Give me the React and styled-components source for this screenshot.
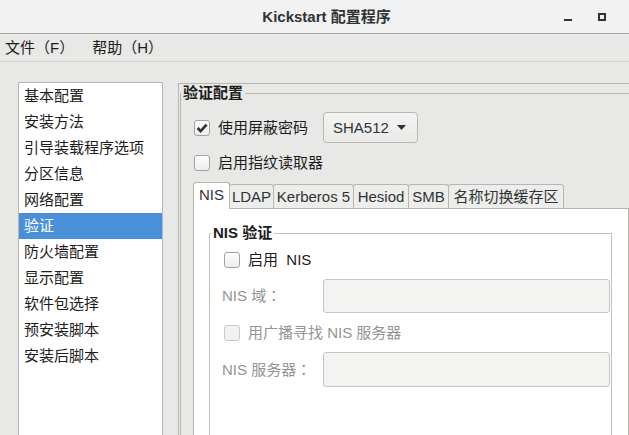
import React from 'react';
import styled, { createGlobalStyle } from 'styled-components';

const Global = createGlobalStyle`
  html, body { margin: 0; padding: 0; background: #e8e8e7; }
  body {
    font-family: "Liberation Sans", "Noto Sans CJK SC", sans-serif;
    font-size: 15px;
    color: #1c1c1c;
  }
  * { box-sizing: border-box; }
`;

const Window = styled.div`
  width: 629px;
  height: 435px;
  display: flex;
  flex-direction: column;
  overflow: hidden;
  background: #e8e8e7;
`;

const TitleBar = styled.div`
  height: 34px;
  flex: none;
  display: flex;
  align-items: center;
  background: #f2f2f2;
  border-bottom: 1px solid #a6a6a6;
`;

const Title = styled.div`
  flex: 1;
  padding-left: 104px;
  text-align: center;
  font-weight: bold;
  font-size: 15px;
  line-height: 18px;
  color: #2e3436;
`;

const Controls = styled.div`
  width: 80px;
  display: flex;
  padding-left: 2px;
`;

const WinButton = styled.div`
  width: 34px;
  height: 20px;
  display: flex;
  align-items: center;
  justify-content: center;
`;

const MenuBar = styled.div`
  height: 28px;
  flex: none;
  display: flex;
  align-items: center;
  gap: 18px;
  padding-left: 5px;
  border-bottom: 1px solid #d3d3d2;
`;

const MenuItem = styled.span`
  line-height: 18px;
`;

const Body = styled.div`
  flex: 1;
  display: flex;
  align-items: flex-start;
  padding: 20px 0 0 18px;
`;

const Sidebar = styled.ul`
  list-style: none;
  margin: 0;
  padding: 0;
  width: 145px;
  height: 420px;
  flex: none;
  background: #ffffff;
  border: 1px solid #b6b6b3;
`;

const SideItem = styled.li`
  height: 26px;
  line-height: 26px;
  padding-left: 5px;
  background: ${p => (p.$active ? '#4a90d9' : 'transparent')};
  color: ${p => (p.$active ? '#ffffff' : '#1c1c1c')};
`;

const RightPane = styled.div`
  margin: 1px 0 0 15px;
  width: 480px;
  height: 420px;
  flex: none;
  border-top: 1px solid #b6b6b3;
  border-left: 1px solid #b6b6b3;
  padding: 1px 0 0 1px;
`;

const Frame = styled.fieldset`
  margin: 0;
  padding: 0;
  min-width: 0;
  border: 1px solid ${p => p.$color || '#b6b6b3'};
  height: ${p => p.$height || 'auto'};
`;

const Legend = styled.legend`
  padding: 0 2px;
  margin-left: ${p => p.$offset || 0}px;
  font-weight: bold;
  font-size: 15px;
  line-height: 16px;
  color: #1c1c1c;
`;

const FrameContent = styled.div`
  display: flex;
  flex-direction: column;
  padding: 11px 0 0 12px;
`;

const OptionRow = styled.div`
  display: flex;
  align-items: center;
  height: ${p => p.$h || 18}px;
  margin-top: ${p => p.$mt || 0}px;
  padding-left: ${p => p.$indent || 0}px;
`;

const CheckLabel = styled.label`
  display: flex;
  align-items: center;
  gap: 8px;
  line-height: 18px;
  color: ${p => (p.$disabled ? '#929595' : '#1c1c1c')};
`;

const Box = styled.span`
  width: 16px;
  height: 16px;
  flex: none;
  border-radius: 3px;
  border: 1px solid ${p => (p.$disabled ? '#cbcbc9' : '#a3a3a0')};
  background: ${p => (p.$disabled ? '#f1f1f0' : 'linear-gradient(#ffffff, #ececeb)')};
  display: flex;
  align-items: center;
  justify-content: center;
`;

const DropButton = styled.div`
  margin-left: 15px;
  width: 95px;
  height: 31px;
  display: flex;
  align-items: center;
  justify-content: space-between;
  padding: 0 11px 0 9px;
  border: 1px solid #b6b6b3;
  border-radius: 4px;
  background: linear-gradient(#f4f4f3, #e9e9e8);
  color: #2e3436;
`;

const Notebook = styled.div`
  margin-top: 10px;
  width: 436px;
  display: flex;
  flex-direction: column;
`;

const TabRow = styled.div`
  display: flex;
  align-items: flex-end;
  height: 26px;
`;

const Tab = styled.div`
  width: ${p => p.$w}px;
  height: ${p => (p.$active ? 27 : 24)}px;
  margin-right: -1px;
  margin-bottom: ${p => (p.$active ? -1 : 0)}px;
  position: relative;
  z-index: ${p => (p.$active ? 2 : 1)};
  display: flex;
  align-items: center;
  justify-content: center;
  padding-bottom: ${p => (p.$active ? 3 : 0)}px;
  border: 1px solid #b6b6b3;
  border-bottom: none;
  border-radius: 3px 3px 0 0;
  background: ${p => (p.$active ? '#ffffff' : '#ededec')};
  color: #2e3436;
  line-height: 18px;
`;

const TabBody = styled.div`
  height: 300px;
  background: #ffffff;
  border: 1px solid #b6b6b3;
  padding: 16px 16px 0 15px;
`;

const NisContent = styled.div`
  display: flex;
  flex-direction: column;
  gap: 10px;
  padding: 10px 1px 0 12px;
`;

const FieldRow = styled.div`
  display: grid;
  grid-template-columns: 101px 1fr;
  align-items: center;
`;

const FieldLabel = styled.span`
  font-family: "Liberation Sans", "Noto Sans CJK TC", sans-serif;
  color: #929595;
  line-height: 18px;
`;

const Input = styled.div`
  height: ${p => p.$h || 34}px;
  border: 1px solid #c6c6c4;
  border-radius: 3px;
  background: #f3f3f2;
`;

function Checkbox({ checked, disabled, children }) {
  return (
    <CheckLabel $disabled={disabled}>
      <Box $disabled={disabled}>
        {checked && (
          <svg width="12" height="12" viewBox="0 0 12 12">
            <path d="M1.6 6 L4.6 9.2 L10.6 2.6" fill="none" stroke="#2e3436" strokeWidth="2.6" />
          </svg>
        )}
      </Box>
      <span>{children}</span>
    </CheckLabel>
  );
}

const sideItems = ['基本配置', '安装方法', '引导装载程序选项', '分区信息', '网络配置', '验证', '防火墙配置', '显示配置', '软件包选择', '预安装脚本', '安装后脚本'];
const tabs = [
  { t: 'NIS', w: 37 },
  { t: 'LDAP', w: 45 },
  { t: 'Kerberos 5', w: 81 },
  { t: 'Hesiod', w: 56 },
  { t: 'SMB', w: 41 },
  { t: '名称切换缓存区', w: 116 },
];

export default function App() {
  return (
    <>
      <Global />
      <Window>
        <TitleBar>
          <Title>Kickstart 配置程序</Title>
          <Controls>
            <WinButton>
              <svg width="8" height="10" viewBox="0 0 8 10">
                <rect x="0" y="7" width="8" height="2" fill="#2e3436" />
              </svg>
            </WinButton>
            <WinButton>
              <svg width="8" height="10" viewBox="0 0 8 10">
                <rect x="1" y="2" width="6" height="6" fill="none" stroke="#2e3436" strokeWidth="2" />
              </svg>
            </WinButton>
          </Controls>
        </TitleBar>
        <MenuBar>
          <MenuItem>文件（F）</MenuItem>
          <MenuItem>帮助（H）</MenuItem>
        </MenuBar>
        <Body>
          <Sidebar>
            {sideItems.map(s => (
              <SideItem key={s} $active={s === '验证'}>{s}</SideItem>
            ))}
          </Sidebar>
          <RightPane>
            <Frame $height="420px">
              <Legend>验证配置</Legend>
              <FrameContent>
                <OptionRow $h={31} $indent={1}>
                  <Checkbox checked>使用屏蔽密码</Checkbox>
                  <DropButton>
                    <span>SHA512</span>
                    <svg width="9" height="5" viewBox="0 0 9 5">
                      <path d="M0 0 L9 0 L4.5 5 Z" fill="#2e3436" />
                    </svg>
                  </DropButton>
                </OptionRow>
                <OptionRow $mt={11} $indent={1}>
                  <Checkbox>启用指纹读取器</Checkbox>
                </OptionRow>
                <Notebook>
                  <TabRow>
                    {tabs.map((t, i) => (
                      <Tab key={t.t} $w={t.w} $active={i === 0}>{t.t}</Tab>
                    ))}
                  </TabRow>
                  <TabBody>
                    <Frame $color="#c2c2c0" $height="260px">
                      <Legend $offset={1}>NIS 验证</Legend>
                      <NisContent>
                        <OptionRow $indent={2}>
                          <Checkbox>启用&nbsp;&nbsp;NIS</Checkbox>
                        </OptionRow>
                        <FieldRow>
                          <FieldLabel>NIS 域：</FieldLabel>
                          <Input $h={34} />
                        </FieldRow>
                        <OptionRow $indent={2} $mt={1}>
                          <Checkbox disabled>用广播寻找 NIS 服务器</Checkbox>
                        </OptionRow>
                        <FieldRow>
                          <FieldLabel>NIS 服务器：</FieldLabel>
                          <Input $h={35} />
                        </FieldRow>
                      </NisContent>
                    </Frame>
                  </TabBody>
                </Notebook>
              </FrameContent>
            </Frame>
          </RightPane>
        </Body>
      </Window>
    </>
  );
}
